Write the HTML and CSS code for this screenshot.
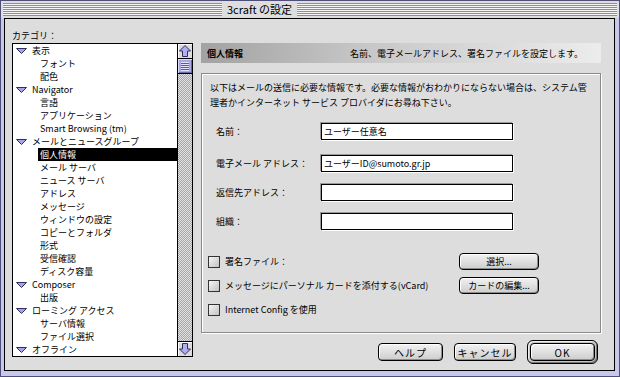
FILE: index.html
```html
<!DOCTYPE html>
<html>
<head>
    <meta charset="utf-8" />
    <title>3craft の設定</title>
    <link rel="stylesheet" href="styles.css">
</head>
<body>
    <div class="win">
        <div class="titlebar">
            <span class="stripes left"></span>
            <span class="title">3craft の設定</span>
            <span class="stripes right"></span>
        </div>
        <div class="content">
            <div class="side">
                <div class="cap">カテゴリ：</div>
                <div class="listbox">
                    <ul class="tree">
                        <li class="p"><svg width="11" height="6" viewBox="0 0 11 6"><polygon points="0.5,0.5 10.5,0.5 5.5,5.5" fill="#a4a4ee" stroke="#2e2e5c" /></svg>表示</li>
                        <li class="c"><span>フォント</span></li>
                        <li class="c"><span>配色</span></li>
                        <li class="p"><svg width="11" height="6" viewBox="0 0 11 6"><polygon points="0.5,0.5 10.5,0.5 5.5,5.5" fill="#a4a4ee" stroke="#2e2e5c" /></svg>Navigator</li>
                        <li class="c"><span>言語</span></li>
                        <li class="c"><span>アプリケーション</span></li>
                        <li class="c"><span>Smart Browsing (tm)</span></li>
                        <li class="p"><svg width="11" height="6" viewBox="0 0 11 6"><polygon points="0.5,0.5 10.5,0.5 5.5,5.5" fill="#a4a4ee" stroke="#2e2e5c" /></svg>メールとニュースグループ</li>
                        <li class="c sel"><span>個人情報</span></li>
                        <li class="c"><span>メール サーバ</span></li>
                        <li class="c"><span>ニュース サーバ</span></li>
                        <li class="c"><span>アドレス</span></li>
                        <li class="c"><span>メッセージ</span></li>
                        <li class="c"><span>ウィンドウの設定</span></li>
                        <li class="c"><span>コピーとフォルダ</span></li>
                        <li class="c"><span>形式</span></li>
                        <li class="c"><span>受信確認</span></li>
                        <li class="c"><span>ディスク容量</span></li>
                        <li class="p"><svg width="11" height="6" viewBox="0 0 11 6"><polygon points="0.5,0.5 10.5,0.5 5.5,5.5" fill="#a4a4ee" stroke="#2e2e5c" /></svg>Composer</li>
                        <li class="c"><span>出版</span></li>
                        <li class="p"><svg width="11" height="6" viewBox="0 0 11 6"><polygon points="0.5,0.5 10.5,0.5 5.5,5.5" fill="#a4a4ee" stroke="#2e2e5c" /></svg>ローミング アクセス</li>
                        <li class="c"><span>サーバ情報</span></li>
                        <li class="c"><span>ファイル選択</span></li>
                        <li class="p"><svg width="11" height="6" viewBox="0 0 11 6"><polygon points="0.5,0.5 10.5,0.5 5.5,5.5" fill="#a4a4ee" stroke="#2e2e5c" /></svg>オフライン</li>
                    </ul>
                    <div class="scroll">
                        <div class="arrow up"><svg width="14" height="14" viewBox="0 0 14 14"><polygon points="7,1.5 12.5,7 9.5,7 9.5,12.5 4.5,12.5 4.5,7 1.5,7" fill="#b0b0f0" stroke="#2e2e5c" /></svg></div>
                        <div class="thumb"><div class="grip"></div></div>
                        <div class="track"></div>
                        <div class="arrow down"><svg width="14" height="14" viewBox="0 0 14 14"><polygon points="7,12.5 12.5,7 9.5,7 9.5,1.5 4.5,1.5 4.5,7 1.5,7" fill="#b0b0f0" stroke="#2e2e5c" /></svg></div>
                    </div>
                </div>
            </div>
            <div class="main">
                <div class="head"><b>個人情報</b><span>名前、電子メールアドレス、署名ファイルを設定します。</span></div>
                <div class="group">
                    <p class="intro">以下はメールの送信に必要な情報です。必要な情報がおわかりにならない場合は、システム管<br>理者かインターネット サービス プロバイダにお尋ね下さい。</p>
                    <div class="fields">
                        <div class="field"><label for="name">名前：</label><input id="name" type="text" value="ユーザー任意名" /></div>
                        <div class="field mail"><label for="mail">電子メール アドレス：</label><input id="mail" type="text" value="ユーザーID@sumoto.gr.jp" /></div>
                        <div class="field"><label for="reply">返信先アドレス：</label><input id="reply" type="text" /></div>
                        <div class="field"><label for="org">組織：</label><input id="org" type="text" /></div>
                    </div>
                    <div class="checks">
                        <div class="check"><label><span class="box"></span>署名ファイル：</label><button class="btn side-btn">選択...</button></div>
                        <div class="check"><label><span class="box"></span>メッセージにパーソナル カードを添付する(vCard)</label><button class="btn side-btn">カードの編集...</button></div>
                        <div class="check"><label><span class="box"></span>Internet Config を使用</label></div>
                    </div>
                </div>
                <div class="actions">
                    <button class="btn help">ヘルプ</button>
                    <button class="btn cancel">キャンセル</button>
                    <span class="ring"><button class="btn ok">OK</button></span>
                </div>
            </div>
        </div>
    </div>
</body>
</html>
```

FILE: styles.css
```css
* {
    box-sizing: border-box;
    font-family: "Noto Sans CJK JP", "Liberation Sans", sans-serif;
}

body {
    margin: 0;
    font-size: 9px;
    color: #000;
    background: #c8c8ec;
}

.win {
    width: 620px;
    height: 377px;
    border: 1px solid #4e4e78;
    background: #c8c8ec;
    display: flex;
    flex-direction: column;
}

/* title bar */
.titlebar {
    height: 17px;
    padding: 0 2px;
    display: flex;
    align-items: center;
    background: #dedede;
}

.stripes {
    height: 13px;
    background: repeating-linear-gradient(to bottom, #8e8e8e 0, #8e8e8e 1px, #f6f6f6 1px, #f6f6f6 2px);
}

.stripes.left {
    width: 219px;
}

.stripes.right {
    flex: 1;
}

.title {
    padding: 0 5px;
    font-size: 11px;
    line-height: 17px;
}

.content {
    flex: 1;
    margin: 0 4px 5px 3px;
    border: 1px solid #000;
    background: #dddddd;
    display: flex;
    gap: 8px;
    padding: 10px 12px 0 7px;
}

/* category list */
.side {
    width: 181px;
}

.cap {
    height: 14px;
    line-height: 13px;
}

.listbox {
    height: 314px;
    border: 1px solid #000;
    background: #fff;
    display: flex;
}

.tree {
    flex: 1;
    list-style: none;
    margin: 0;
    padding: 0;
    overflow: hidden;
}

.tree li {
    height: 13px;
    line-height: 13px;
    white-space: nowrap;
}

.tree .p {
    display: flex;
    align-items: center;
    padding-left: 3px;
}

.tree .p svg {
    margin-right: 5px;
}

.tree .c span {
    display: block;
    margin-left: 25px;
    padding-left: 2px;
}

.tree .sel span {
    background: #000;
    color: #fff;
}

.scroll {
    width: 15px;
    border-left: 1px solid #000;
    display: flex;
    flex-direction: column;
}

.arrow {
    height: 15px;
    background: #dcdcdc;
    display: flex;
    align-items: center;
    justify-content: center;
}

.arrow.up {
    border-bottom: 1px solid #000;
    box-shadow: inset 1px 1px 0 #fff;
}

.arrow.down {
    border-top: 1px solid #000;
    box-shadow: inset 1px 1px 0 #fff;
}

.thumb {
    height: 15px;
    border-bottom: 1px solid #000;
    background: #a8a8e4;
    box-shadow: inset 1px 1px 0 #d8d8ff, inset -1px -1px 0 #6a6aa8;
    display: flex;
    align-items: center;
    justify-content: center;
}

.grip {
    width: 8px;
    height: 9px;
    background: repeating-linear-gradient(to bottom, #e4e4ff 0, #e4e4ff 1px, #5a5a9c 1px, #5a5a9c 2px);
}

.track {
    flex: 1;
    background: conic-gradient(#a6a6a6 25%, #e2e2e2 0 50%, #a6a6a6 0 75%, #e2e2e2 0) 0 0 / 2px 2px;
}

/* right panel */
.main {
    width: 400px;
    padding-top: 14px;
}

.head {
    height: 20px;
    display: flex;
    align-items: center;
    justify-content: space-between;
    padding: 0 18px 0 6px;
    background: linear-gradient(to right, #a2a2a2, #c6c6c6 40%, #ececec);
}

.group {
    margin-top: 10px;
    height: 260px;
    border: 1px solid #8a8a8a;
    box-shadow: inset 1px 1px 0 #fff, 1px 1px 0 #fff;
}

.intro {
    margin: 0;
    padding: 6px 4px 0 8px;
    line-height: 15px;
    white-space: nowrap;
}

.fields {
    margin-top: 13px;
    padding-left: 14px;
}

.field {
    display: flex;
    align-items: center;
    height: 17px;
    margin-top: 12px;
}

.field:first-child {
    margin-top: 0;
}

.field.mail {
    margin-top: 15px;
}

.field label {
    width: 105px;
}

.field input {
    width: 192px;
    height: 17px;
    margin: 0;
    padding: 0 2px;
    border: 1px solid #000;
    background: #fff;
    font-size: 9px;
    color: #000;
    box-shadow: -1px -1px 0 #999, 1px 1px 0 #fff;
    outline: none;
}

.checks {
    margin-top: 23px;
    padding-left: 6px;
}

.check {
    display: grid;
    grid-template-columns: 251px 80px;
    align-items: center;
    height: 17px;
    margin-top: 7px;
}

.check:first-child {
    margin-top: 0;
}

.check label {
    display: flex;
    align-items: center;
    gap: 5px;
}

.box {
    width: 12px;
    height: 12px;
    border: 1px solid #333;
    background: linear-gradient(135deg, #f6f6f6, #c2c2c2);
}

.btn {
    height: 18px;
    padding: 0;
    border: 1px solid #000;
    border-radius: 4px;
    background: linear-gradient(#f2f2f2, #cdcdcd);
    box-shadow: inset 1px 1px 0 #fff, inset -1px -1px 0 #8c8c8c;
    font-size: 9px;
    color: #000;
    text-align: center;
}

.side-btn {
    width: 80px;
    height: 17px;
}

.actions {
    display: flex;
    justify-content: flex-end;
    align-items: center;
    gap: 11px;
    height: 24px;
    margin-top: 7px;
    padding-right: 3px;
}

.actions .btn {
    font-size: 10px;
    letter-spacing: 1px;
}

.help {
    width: 65px;
}

.cancel {
    width: 62px;
}

.ring {
    display: flex;
    border: 1px solid #000;
    border-radius: 6px;
    padding: 2px;
    background: #c4c4c4;
    box-shadow: inset 1px 1px 0 #eee, inset -1px -1px 0 #777;
}

.ok {
    width: 65px;
}
```
